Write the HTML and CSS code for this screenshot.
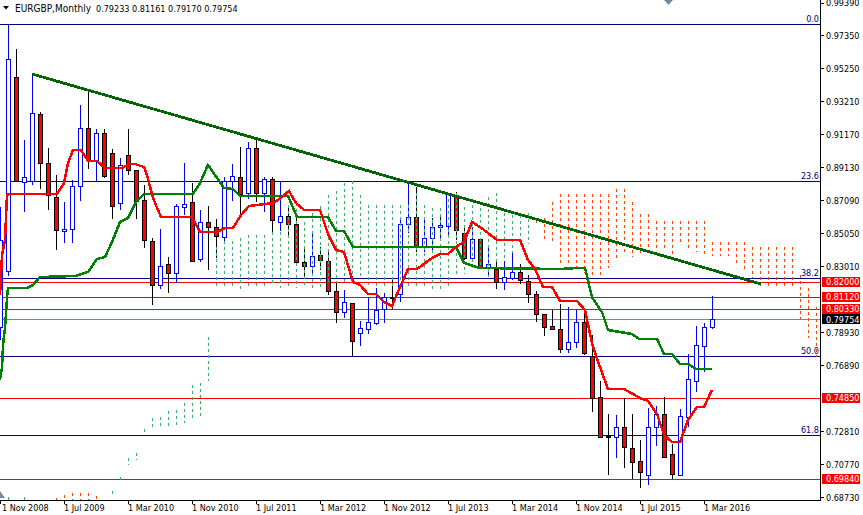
FILE: index.html
```html
<!DOCTYPE html>
<html lang="en">
<head>
<meta charset="utf-8">
<title>EURGBP,Monthly</title>
<link rel="stylesheet" href="styles.css">
</head>
<body>
<svg class="chart" width="863" height="515" viewBox="0 0 863 515" role="img" aria-label="EURGBP monthly chart">
  <!-- horizontal levels -->
  <path class="fib" d="M0 24.5H820M0 181.5H820M0 278.5H820M0 356.5H820M0 435.5H820"/>
  <path class="level" d="M0 282.5H820M0 297.5H820M0 309.5H820M0 398.5H820M0 479.5H820"/>
  <path class="last" d="M0 319.5H820"/>

  <!-- candle wicks -->
  <path class="wick-up" d="M0.5 207V340M8.5 25V276M24.5 140V212M32.5 74V185M64.5 202V243M72.5 180V243M80.5 105V201M96.5 129V181M120.5 158V210M160.5 229V289M176.5 204V283M184.5 163V215M200.5 210V262M224.5 177V241M232.5 164V201M248.5 142V199M264.5 177V212M280.5 182V231M312.5 234V273M344.5 290V318M360.5 321V346M368.5 297V334M376.5 288V325M384.5 293V323M400.5 220V302M408.5 182V233M424.5 218V252M432.5 218V252M440.5 217V238M448.5 193V238M472.5 227V260M488.5 248V277M504.5 261V290M512.5 252V280M568.5 307V353M576.5 310V348M616.5 415V458M648.5 408V485M656.5 406V446M680.5 409V476M688.5 354V427M696.5 326V392M704.5 323V372M712.5 296V329"/>
  <path class="wick-down" d="M16.5 49V181M40.5 112V189M48.5 148V210M56.5 175V250M88.5 90V169M104.5 129V178M112.5 149V219M128.5 129V175M136.5 170V219M144.5 185V248M152.5 238V305M168.5 257V293M192.5 183V261M208.5 206V270M216.5 219V258M240.5 147V214M256.5 140V202M272.5 177V232M288.5 208V235M296.5 218V262M304.5 249V279M320.5 247V270M328.5 252V295M336.5 282V323M352.5 303V357M392.5 280V309M416.5 187V252M456.5 192V240M464.5 227V260M480.5 239V269M496.5 262V289M520.5 264V284M528.5 275V303M536.5 291V322M544.5 314V336M552.5 310V329M560.5 304V353M584.5 310V355M592.5 335V412M600.5 381V438M608.5 414V475M624.5 398V468M632.5 414V479M640.5 440V488M664.5 397V457M672.5 444V479"/>

  <!-- candle bodies -->
  <path class="body-up" d="M-1.5 240.5h4V327.5h-4zM6.5 59.5h4V271.5h-4zM22.5 177.5h4V182.5h-4zM30.5 113.5h4V181.5h-4zM62.5 229.5h4V231.5h-4zM70.5 186.5h4V229.5h-4zM78.5 128.5h4V186.5h-4zM94.5 133.5h4V161.5h-4zM118.5 165.5h4V203.5h-4zM158.5 266.5h4V285.5h-4zM174.5 206.5h4V273.5h-4zM182.5 204.5h4V207.5h-4zM198.5 222.5h4V259.5h-4zM222.5 181.5h4V237.5h-4zM230.5 176.5h4V181.5h-4zM246.5 148.5h4V193.5h-4zM262.5 179.5h4V193.5h-4zM278.5 216.5h4V222.5h-4zM310.5 256.5h4V266.5h-4zM342.5 302.5h4V312.5h-4zM358.5 328.5h4V333.5h-4zM366.5 322.5h4V329.5h-4zM374.5 310.5h4V323.5h-4zM382.5 297.5h4V309.5h-4zM398.5 224.5h4V294.5h-4zM406.5 217.5h4V224.5h-4zM422.5 238.5h4V246.5h-4zM430.5 227.5h4V238.5h-4zM438.5 225.5h4V227.5h-4zM446.5 194.5h4V226.5h-4zM470.5 239.5h4V258.5h-4zM486.5 264.5h4V268.5h-4zM502.5 277.5h4V282.5h-4zM510.5 272.5h4V278.5h-4zM566.5 342.5h4V349.5h-4zM574.5 322.5h4V342.5h-4zM614.5 427.5h4V437.5h-4zM646.5 427.5h4V475.5h-4zM654.5 414.5h4V427.5h-4zM678.5 416.5h4V475.5h-4zM686.5 379.5h4V417.5h-4zM694.5 345.5h4V381.5h-4zM702.5 327.5h4V346.5h-4zM710.5 319.5h4V327.5h-4z"/>
  <path class="body-down" d="M14.5 77.5h4V181.5h-4zM38.5 114.5h4V163.5h-4zM46.5 163.5h4V195.5h-4zM54.5 197.5h4V230.5h-4zM86.5 128.5h4V160.5h-4zM102.5 133.5h4V176.5h-4zM110.5 153.5h4V206.5h-4zM126.5 155.5h4V170.5h-4zM134.5 170.5h4V201.5h-4zM142.5 200.5h4V240.5h-4zM150.5 241.5h4V285.5h-4zM166.5 264.5h4V273.5h-4zM190.5 202.5h4V261.5h-4zM206.5 222.5h4V227.5h-4zM214.5 227.5h4V236.5h-4zM238.5 177.5h4V194.5h-4zM254.5 148.5h4V193.5h-4zM270.5 179.5h4V220.5h-4zM286.5 216.5h4V224.5h-4zM294.5 224.5h4V262.5h-4zM302.5 262.5h4V266.5h-4zM318.5 255.5h4V260.5h-4zM326.5 261.5h4V291.5h-4zM334.5 291.5h4V312.5h-4zM350.5 303.5h4V341.5h-4zM390.5 297.5h4V298.5h-4zM414.5 217.5h4V246.5h-4zM454.5 195.5h4V230.5h-4zM462.5 233.5h4V258.5h-4zM478.5 239.5h4V268.5h-4zM494.5 269.5h4V282.5h-4zM518.5 272.5h4V280.5h-4zM526.5 281.5h4V294.5h-4zM534.5 294.5h4V314.5h-4zM542.5 314.5h4V327.5h-4zM550.5 326.5h4V329.5h-4zM558.5 329.5h4V349.5h-4zM582.5 322.5h4V353.5h-4zM590.5 356.5h4V398.5h-4zM598.5 397.5h4V437.5h-4zM606.5 436.5h4V437.5h-4zM622.5 427.5h4V447.5h-4zM630.5 448.5h4V462.5h-4zM638.5 461.5h4V472.5h-4zM662.5 414.5h4V457.5h-4zM670.5 454.5h4V474.5h-4z"/>

  <!-- cloud -->
  <path class="cloud-up" d="M8.5 497V500M24.5 497V500M112.5 491V495M120.5 477V480M128.5 458V465M136.5 453V460M144.5 429V432M152.5 418V427M160.5 417V426M168.5 411V426M176.5 410V425M184.5 403V423M192.5 385V418M200.5 383V416M208.5 337V381M216.5 247V286M224.5 241V286M232.5 241V286M240.5 238V289M248.5 235V286M256.5 235V286M264.5 235V286M272.5 232V286M280.5 232V288M288.5 205V288M296.5 203V288M304.5 222V288M312.5 213V288M320.5 206V287M328.5 195V284M336.5 191V283M344.5 183V283M352.5 181V278M360.5 195V278M368.5 205V285M376.5 205V287M384.5 205V287M392.5 205V287M400.5 205V288M408.5 205V288M416.5 193V287M424.5 205V286M432.5 208V289M440.5 208V289M448.5 193V286M456.5 193V276M464.5 207V274M472.5 205V268M480.5 202V268M488.5 197V277M496.5 193V262M504.5 213V260M512.5 215V253M520.5 215V240M528.5 213V244"/>
  <path class="cloud-down" d="M56.5 498V500M64.5 495V500M72.5 493V500M80.5 493V500M88.5 493V500M96.5 496V500M536.5 220V224M544.5 218V239M552.5 202V241M560.5 194V263M568.5 194V265M576.5 194V268M584.5 194V273M592.5 194V275M600.5 194V275M608.5 194V268M616.5 189V258M624.5 189V255M632.5 202V257M640.5 214V253M648.5 214V252M656.5 221V248M664.5 221V248M672.5 221V254M680.5 221V242M688.5 221V248M696.5 221V252M704.5 221V254M712.5 242V256M720.5 242V256M728.5 242V256M736.5 242V263M744.5 242V269M752.5 247V278M760.5 247V286M768.5 247V286M776.5 247V286M784.5 247V286M792.5 247V289M800.5 275V319M808.5 288V338M816.5 307V357"/>

  <!-- kijun, tenkan, trend line -->
  <polyline class="kijun" points="0,380 2,368 3,345 5,328 7,298 8,288 27,288 33,285 40,277 75,276 88,272 97,259 105,257 112,242 120,222 128,218 136,202 144,194 193,194 200,183 208,165 224,188 233,189 240,196 288,196 297,217 328,217 336,231 344,231 353,247 456,247 464,263 480,268 560,269 577,268 585,268 592,297 602,312 608,330 632,334 639,339 657,339 664,354 672,354 680,364 688,364 696,369 712,369"/>
  <polyline class="tenkan" points="0,295 2,255 5,240 7,195 9,194 57,194 64,183 68,163 73,150 81,150 88,161 97,161 105,168 122,168 129,164 135,164 144,167 147,175 153,198 161,217 192,217 200,232 217,232 225,228 233,228 241,215 249,206 257,205 273,203 281,198 289,191 296,203 304,210 320,210 328,234 336,250 344,252 353,282 360,285 368,294 376,294 384,302 392,306 400,287 408,269 417,269 432,258 440,254 448,254 457,246 464,242 472,222 480,227 488,233 497,240 520,240 528,260 535,269 543,287 552,287 560,301 577,301 585,310 592,343 600,367 608,389 624,389 640,398 648,401 657,414 664,435 672,442 680,442 688,420 697,407 704,407 712,390"/>
  <line class="trend" x1="32" y1="74" x2="761" y2="284"/>

  <!-- markers -->
  <polygon class="marker" points="664,0 673,0 668.5,5"/>
  <polygon class="marker" points="0,491 5,498 0,498"/>

  <!-- axes -->
  <path class="axis" d="M820.5 0V500.5H0"/>
  <path class="axis" d="M821 3.5h3M821 35.5h3M821 68.5h3M821 101.5h3M821 134.5h3M821 167.5h3M821 200.5h3M821 233.5h3M821 266.5h3M821 332.5h3M821 365.5h3M821 431.5h3M821 464.5h3M821 497.5h3M0.5 501v3M64.5 501v3M128.5 501v3M192.5 501v3M256.5 501v3M320.5 501v3M384.5 501v3M448.5 501v3M512.5 501v3M576.5 501v3M640.5 501v3M704.5 501v3"/>

  <!-- header -->
  <polygon class="caret" points="3,6 9,6 6,9.5"/>
  <text class="title" x="15" y="12">EURGBP,Monthly</text>
  <text class="txt" x="96" y="12">0.79233 0.81161 0.79170 0.79754</text>

  <!-- fibonacci labels -->
  <text class="fib-label" x="819" y="22">0.0</text>
  <text class="fib-label" x="819" y="179">23.6</text>
  <text class="fib-label" x="819" y="276">38.2</text>
  <text class="fib-label" x="819" y="354">50.0</text>
  <text class="fib-label" x="819" y="433">61.8</text>

  <!-- price scale -->
  <text class="txt" x="826" y="6">0.99390</text>
  <text class="txt" x="826" y="39">0.97350</text>
  <text class="txt" x="826" y="72">0.95250</text>
  <text class="txt" x="826" y="105">0.93210</text>
  <text class="txt" x="826" y="138">0.91170</text>
  <text class="txt" x="826" y="171">0.89130</text>
  <text class="txt" x="826" y="204">0.87090</text>
  <text class="txt" x="826" y="237">0.85050</text>
  <text class="txt" x="826" y="270">0.83010</text>
  <text class="txt" x="826" y="336">0.78930</text>
  <text class="txt" x="826" y="369">0.76890</text>
  <text class="txt" x="826" y="435">0.72810</text>
  <text class="txt" x="826" y="468">0.70770</text>
  <text class="txt" x="826" y="501">0.68730</text>

  <!-- price tags -->
  <rect class="tag-red" x="822" y="277" width="38" height="10"/>
  <text class="tag-text" x="826" y="285">0.82000</text>
  <rect class="tag-red" x="822" y="292" width="38" height="10"/>
  <text class="tag-text" x="826" y="300">0.81120</text>
  <rect class="tag-red" x="822" y="304" width="38" height="10"/>
  <text class="tag-text" x="826" y="312">0.80330</text>
  <rect class="tag-black" x="822" y="314" width="38" height="10"/>
  <text class="tag-text" x="826" y="323">0.79754</text>
  <rect class="tag-red" x="822" y="393" width="38" height="10"/>
  <text class="tag-text" x="826" y="401">0.74850</text>
  <rect class="tag-red" x="822" y="474" width="38" height="10"/>
  <text class="tag-text" x="826" y="482">0.69840</text>

  <!-- time scale -->
  <text class="txt" x="2" y="511">1 Nov 2008</text>
  <text class="txt" x="64" y="511">1 Jul 2009</text>
  <text class="txt" x="128" y="511">1 Mar 2010</text>
  <text class="txt" x="192" y="511">1 Nov 2010</text>
  <text class="txt" x="256" y="511">1 Jul 2011</text>
  <text class="txt" x="320" y="511">1 Mar 2012</text>
  <text class="txt" x="384" y="511">1 Nov 2012</text>
  <text class="txt" x="448" y="511">1 Jul 2013</text>
  <text class="txt" x="512" y="511">1 Mar 2014</text>
  <text class="txt" x="576" y="511">1 Nov 2014</text>
  <text class="txt" x="640" y="511">1 Jul 2015</text>
  <text class="txt" x="704" y="511">1 Mar 2016</text>
</svg>
</body>
</html>
```

FILE: styles.css
```css
html, body {
  margin: 0;
  padding: 0;
  background: #fff;
  overflow: hidden;
}

.chart {
  display: block;
}

.chart path,
.chart polyline,
.chart line {
  fill: none;
  shape-rendering: crispEdges;
}

.chart text {
  font-family: "DejaVu Sans Condensed", "DejaVu Sans", sans-serif;
  font-stretch: condensed;
  font-size: 9px;
}

.fib { stroke: #000080; stroke-width: 1; }
.level { stroke: #ff0000; stroke-width: 1; }
.last { stroke: #778899; stroke-width: 1; }

.wick-up { stroke: #0000ff; stroke-width: 1; }
.wick-down { stroke: #000; stroke-width: 1; }
.chart .body-up { fill: #fff; stroke: #0000ff; stroke-width: 1; }
.chart .body-down { fill: #ff0000; stroke: #000; stroke-width: 1; }

.cloud-up { stroke: #3cb371; stroke-width: 1; stroke-dasharray: 3 3; }
.cloud-down { stroke: #ff4500; stroke-width: 1; stroke-dasharray: 3 3; }

.kijun { stroke: #008000; stroke-width: 2.5; }
.tenkan { stroke: #ff0000; stroke-width: 2.5; }
.trend { stroke: #006400; stroke-width: 2.8; }

.marker { fill: #778899; }
.caret { fill: #000; }
.axis { stroke: #000; stroke-width: 1; }

.chart .title { font-size: 10px; fill: #000; }
.txt { fill: #000; }
.fib-label { fill: #000080; text-anchor: end; }
.tag-red { fill: #ff0000; }
.tag-black { fill: #000; }
.tag-text { fill: #fff; }
```
